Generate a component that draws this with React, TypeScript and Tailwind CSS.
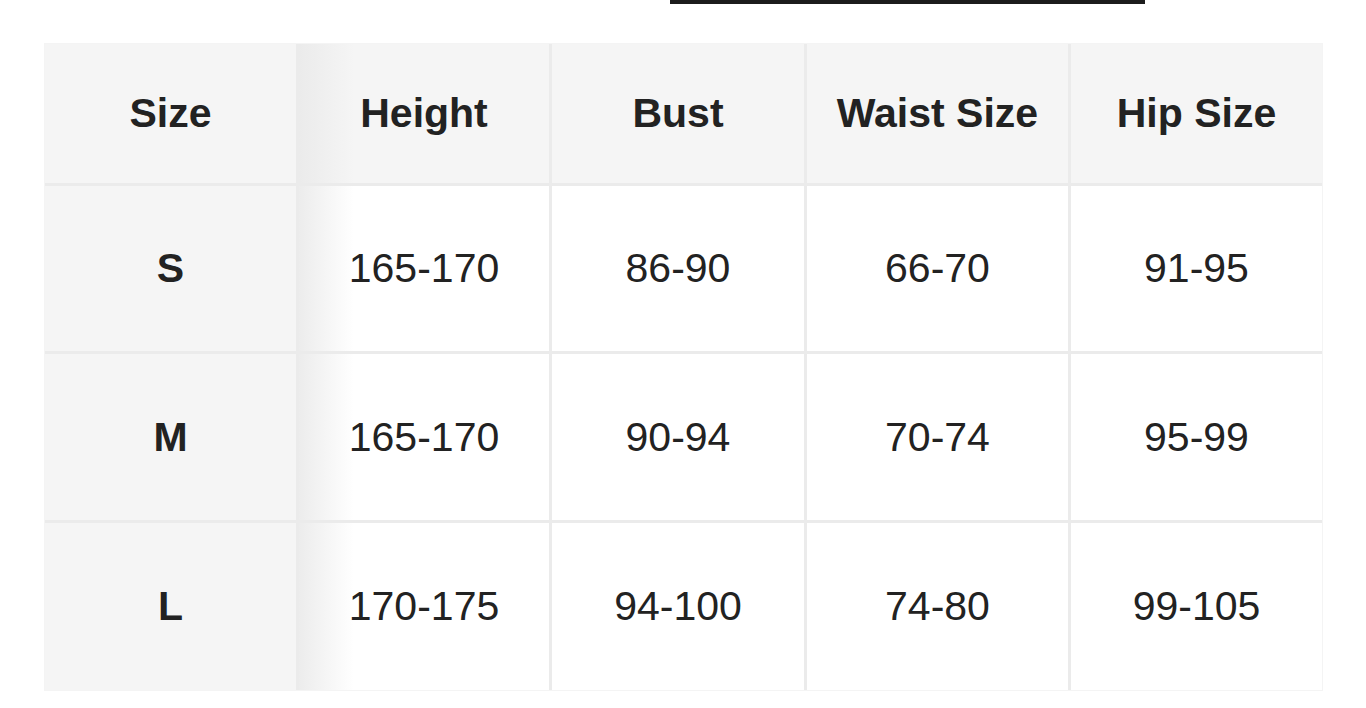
import React from "react";

const headers = ["Size", "Height", "Bust", "Waist Size", "Hip Size"];
const rows = [
  ["S", "165-170", "86-90", "66-70", "91-95"],
  ["M", "165-170", "90-94", "70-74", "95-99"],
  ["L", "170-175", "94-100", "74-80", "99-105"],
];

export default function App() {
  return (
    <div
      className="w-[1366px] h-[708px] bg-white text-[#222222] overflow-hidden"
      style={{ fontFamily: '"Liberation Sans", Arial, sans-serif' }}
    >
      <div className="flex">
        <div className="ml-[670px] w-[475px] h-[4px] bg-[#1c1c1c]" />
      </div>
      <div className="mt-[40px] ml-[45px] w-[1277px]">
        <div className="grid grid-cols-[251px_250px_252px_261px_251px] grid-rows-[139px_165px_166px_167px] gap-[3px] bg-[#ebebeb] shadow-[0_0_0_1px_#f4f4f4]">
          {headers.map((h, i) => (
            <div
              key={h}
              className={
                "flex items-center justify-center font-bold text-[41px] leading-none " +
                (i === 1
                  ? "bg-[linear-gradient(to_right,#ebebeb,#f5f5f5_55px)]"
                  : "bg-[#f5f5f5]")
              }
            >
              {h}
            </div>
          ))}
          {rows.map((r) =>
            r.map((c, i) => (
              <div
                key={r[0] + i}
                className={
                  "flex items-center justify-center text-[41px] leading-none " +
                  (i === 0
                    ? "bg-[#f5f5f5] font-bold"
                    : i === 1
                    ? "bg-[linear-gradient(to_right,#ececec,#ffffff_55px)]"
                    : "bg-white")
                }
              >
                {c}
              </div>
            ))
          )}
        </div>
      </div>
    </div>
  );
}
